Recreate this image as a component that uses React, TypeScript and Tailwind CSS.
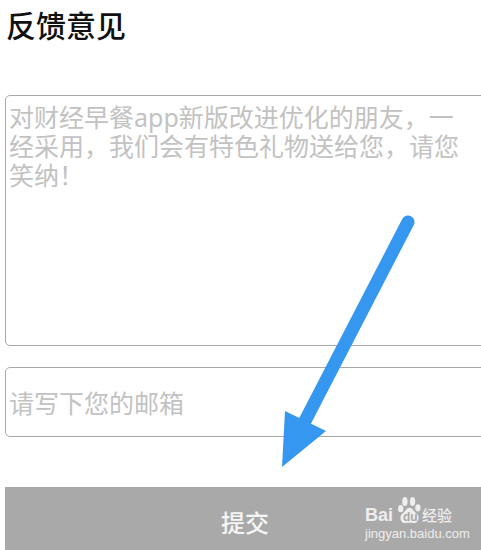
const cjk = "font-['Noto_Sans','Noto_Sans_CJK_SC',sans-serif]";

function Arrow() {
  return (
    <svg className="absolute left-0 top-0 pointer-events-none" width="481" height="550" viewBox="0 0 481 550">
      <path d="M408 222 L305 421" stroke="#3597f0" strokeWidth="13" strokeLinecap="round" fill="none" />
      <path d="M282 467 L285 411 L326 431 Z" fill="#3597f0" />
    </svg>
  );
}

function Watermark() {
  return (
    <div className="absolute left-[365px] top-[497px] flex flex-col gap-[4px] text-white/80 font-['Liberation_Sans','Noto_Sans_CJK_SC',sans-serif]">
      <div className="flex items-end h-[27px]">
        <span className="text-[18px] leading-[18px] font-bold w-[33px]">Bai</span>
        <div className="relative w-[23px] h-[27px]">
          <svg className="block" width="23" height="27" viewBox="0 0 30 30" preserveAspectRatio="none">
            <g fill="#ffffff" fillOpacity="0.8">
              <ellipse cx="9" cy="5" rx="3.5" ry="5" />
              <ellipse cx="19" cy="5" rx="3.5" ry="5" />
              <ellipse cx="3.5" cy="13" rx="3.5" ry="4" />
              <ellipse cx="26" cy="12" rx="3.5" ry="4" />
              <path d="M15 12 C19 12 20 16 25 19 C29 23 26 30 20 29 C17 28.5 13 28.5 10 29 C4 30 1 23 5 19 C10 16 11 12 15 12 Z" />
            </g>
          </svg>
          <span className="absolute left-[5px] bottom-[1px] text-[12px] leading-[12px] font-bold text-[#a9a9a9]">du</span>
        </div>
        <span className="text-[15px] leading-[16px] font-medium ml-[1px]">经验</span>
      </div>
      <div className="text-[13px] leading-[12px] whitespace-nowrap">jingyan.baidu.com</div>
    </div>
  );
}

export default function App() {
  return (
    <div className={`relative w-[481px] h-[550px] overflow-hidden bg-white ${cjk}`}>
      <h1 className="pl-[6px] pt-[8px] h-[95px] text-[30px] leading-[36px] font-medium text-[#111]">反馈意见</h1>

      <div className="ml-[5px] w-[490px] flex flex-col">
        <textarea
          readOnly
          className="block w-full h-[251px] resize-none border border-[#a8a8a8] rounded-[5px] pl-[3px] pr-[24px] pt-[7px] text-[25px] leading-[29px] outline-none placeholder:text-[#c2c2c2]"
          placeholder="对财经早餐app新版改进优化的朋友，一经采用，我们会有特色礼物送给您，请您笑纳！"
        />
        <input
          readOnly
          className="block w-full h-[70px] mt-[21px] border border-[#a8a8a8] rounded-[5px] pl-[3px] pt-[2px] text-[25px] outline-none placeholder:text-[#c2c2c2]"
          placeholder="请写下您的邮箱"
        />
        <button className="flex items-center justify-center w-full h-[63px] mt-[50px] bg-[#a9a9a9] text-white/90 text-[24px] font-medium pr-[10px] pt-[8px]">提交</button>
      </div>

      <Arrow />
      <Watermark />
    </div>
  );
}
